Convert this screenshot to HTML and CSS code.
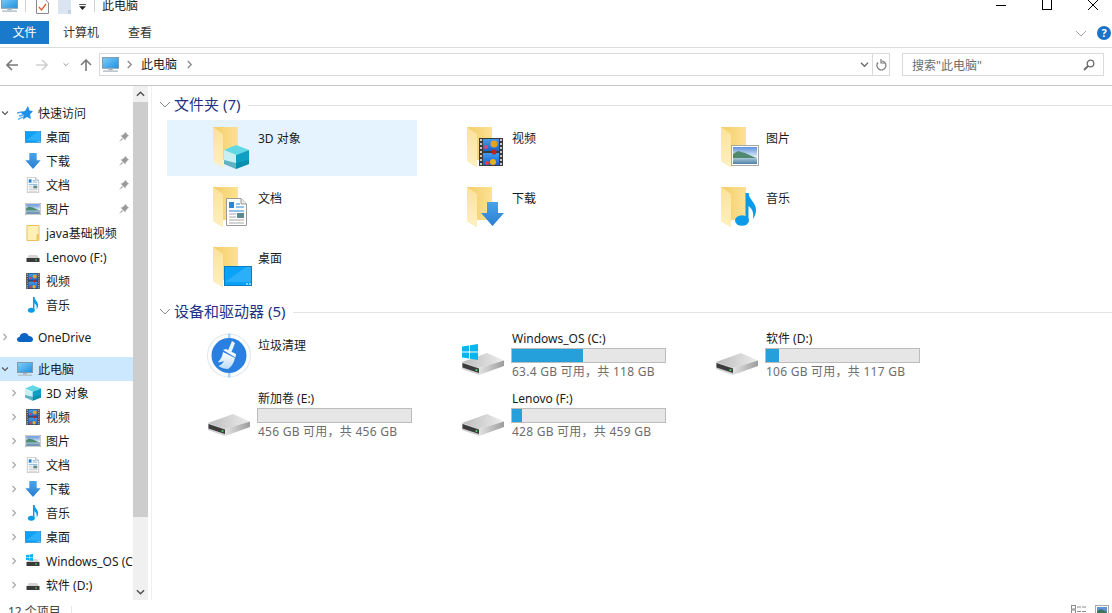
FILE: index.html
```html
<!DOCTYPE html>
<html>

<head>
    <meta charset="utf-8" />
    <title>此电脑</title>
    <link rel="stylesheet" href="styles.css">
</head>

<body>
    <svg class="sprite" xmlns="http://www.w3.org/2000/svg">
        <defs>
            <linearGradient id="gBack" x1="0" y1="0" x2="1" y2="0"><stop offset="0" stop-color="#f2cc68" /><stop offset="1" stop-color="#fde294" /></linearGradient>
            <linearGradient id="gLeaf" x1="0" y1="0" x2="0" y2="1"><stop offset="0" stop-color="#fbe29a" /><stop offset="1" stop-color="#fff0c0" /></linearGradient>
            <linearGradient id="gScreen" x1="0" y1="0" x2="1" y2="1"><stop offset="0" stop-color="#7fd0f8" /><stop offset="1" stop-color="#1f8fe0" /></linearGradient>
            <linearGradient id="gArrow" x1="0" y1="0" x2="0" y2="1"><stop offset="0" stop-color="#4aa3ea" /><stop offset="1" stop-color="#2a7ed0" /></linearGradient>
            <linearGradient id="gSky" x1="0" y1="0" x2="0" y2="1"><stop offset="0" stop-color="#5f92dc" /><stop offset=".6" stop-color="#e4f0f8" /></linearGradient>
            <linearGradient id="gBall" x1="0" y1="0" x2="0" y2="1"><stop offset="0" stop-color="#3f9cf0" /><stop offset="1" stop-color="#1a62c8" /></linearGradient>
            <linearGradient id="gDrive" x1="0" y1="0" x2="1" y2="0"><stop offset="0" stop-color="#bcbcbc" /><stop offset="1" stop-color="#ececec" /></linearGradient>
            <linearGradient id="gDriveSide" x1="0" y1="0" x2="1" y2="0"><stop offset="0" stop-color="#e2e2e2" /><stop offset="1" stop-color="#9c9c9c" /></linearGradient>
            <linearGradient id="gWater" x1="0" y1="0" x2="0" y2="1"><stop offset="0" stop-color="#a8c8d8" /><stop offset="1" stop-color="#4f7fa8" /></linearGradient>
            <linearGradient id="gBroom" x1="0" y1="0" x2="0" y2="1"><stop offset="0" stop-color="#ffffff" /><stop offset="1" stop-color="#bcdcf8" /></linearGradient>
        </defs>
        <symbol id="folder" viewBox="0 0 26 40">
            <path d="M0 0H25V33H10V40L0 34Z" fill="url(#gBack)" />
            <path d="M0 0L10 7V40L0 34Z" fill="url(#gLeaf)" />
        </symbol>
        <symbol id="cube" viewBox="0 0 25 24">
            <path d="M12 0L25 5L12 10L0 5Z" fill="#62d8e6" />
            <path d="M0 5L12 10V24L0 19Z" fill="#c8f0f2" />
            <path d="M12 10L25 5V19L12 24Z" fill="#0e9fc2" />
            <path d="M0 15L12 18L25 15V19L12 24L0 19Z" fill="#0a7f9e" opacity=".55" />
        </symbol>
        <symbol id="film" viewBox="0 0 24 28">
            <rect width="24" height="28" fill="#3a3a3a" />
            <path d="M1 2H3M1 6H3M1 10H3M1 14H3M1 18H3M1 22H3M1 26H3M21 2H23M21 6H23M21 10H23M21 14H23M21 18H23M21 22H23M21 26H23" stroke="#c8c8c8" stroke-width="2" />
            <rect x="4" y="1" width="16" height="12" fill="url(#gBall)" />
            <rect x="4" y="15" width="16" height="12" fill="url(#gBall)" />
            <circle cx="15" cy="6" r="3.5" fill="#e8a020" />
            <circle cx="7" cy="9" r="2" fill="#d84a70" />
            <circle cx="15" cy="14" r="2.5" fill="#c02020" />
            <circle cx="14" cy="24" r="3" fill="#e8b020" />
            <circle cx="8" cy="25" r="2" fill="#e04040" />
        </symbol>
        <symbol id="picture" viewBox="0 0 28 21">
            <rect x=".5" y=".5" width="27" height="20" fill="#fff" stroke="#a8a8a8" />
            <rect x="2" y="2" width="24" height="17" fill="url(#gSky)" />
            <path d="M2 9L7 6L14 8L24 12.500L26 13V14H2Z" fill="#4f8a70" />
            <rect x="2" y="13" width="24" height="6" fill="url(#gWater)" />
        </symbol>
        <symbol id="doc" viewBox="0 0 21 28">
            <path d="M.5 .5H15L20.5 6V27.5H.5Z" fill="#fff" stroke="#9a9a9a" />
            <path d="M15 .5V6H20.5" fill="#e8e8e8" stroke="#9a9a9a" />
            <rect x="3" y="4" width="5" height="6" fill="#2f86d0" />
            <path d="M10 6H14M10 9H18M3 13H18" stroke="#2f86d0" />
            <path d="M3 16H10M3 19H10M3 22H18M3 25H18" stroke="#a8a8a8" />
            <rect x="11" y="15" width="7" height="5" fill="#5a8a90" />
        </symbol>
        <symbol id="arrow" viewBox="0 0 23 24">
            <path d="M6 0H17V11H23L11.5 24L0 11H6Z" fill="url(#gArrow)" />
        </symbol>
        <symbol id="note" viewBox="0 0 21 33">
            <ellipse cx="7" cy="27.5" rx="7" ry="5.2" fill="#0a9be8" />
            <rect x="10.5" width="3" height="27" fill="#0a9be8" />
            <path d="M12 0H13.5C14 7 21 9 21 17C21 21 19.5 24 18 26C19 19 17 15 13 13Z" fill="#0a9be8" />
        </symbol>
        <symbol id="desktop" viewBox="0 0 28 20">
            <rect x=".5" y=".5" width="27" height="19" fill="#0aa2f8" stroke="#0b7cc0" />
            <path d="M1 16L22 1H27V16Z" fill="#4cbcfa" opacity=".5" />
            <path d="M22 18H24M25 18H27" stroke="#fff" />
        </symbol>
        <symbol id="pc" viewBox="0 0 16 16">
            <rect x=".5" y="1.5" width="15" height="10" fill="url(#gScreen)" stroke="#7d9cb0" />
            <rect x="6" y="12" width="4" height="1.5" fill="#a8b4bc" />
            <rect x="1" y="13.5" width="14" height="1.5" fill="#b8c4cc" />
        </symbol>
        <symbol id="drive" viewBox="0 0 42 23">
            <path d="M0 9L25 0L42 7.500L17 15Z" fill="url(#gDrive)" />
            <path d="M17 15L42 7.500V13L17 22Z" fill="url(#gDriveSide)" />
            <path d="M0 9L17 15V22L0 16Z" fill="#d0d0d0" />
            <path d="M.5 10L17 15.500V20L.5 14.500Z" fill="#3c3c3c" />
            <circle cx="14.500" cy="17" r="1.100" fill="#3fdc5a" />
        </symbol>
        <symbol id="driveSmall" viewBox="0 0 16 16">
            <path d="M2 9L4 6H12L14 9Z" fill="#d4d4d4" />
            <rect x="1.500" y="9" width="13" height="4" fill="#3a3a3a" />
            <rect x="10" y="10.500" width="2" height="1" fill="#4fe060" />
        </symbol>
        <symbol id="windows" viewBox="0 0 16 16">
            <path d="M0 2.500L7 1.500V7.500H0ZM8 1.300L16 0V7.500H8ZM0 8.500H7V14.500L0 13.500ZM8 8.500H16V16L8 14.700Z" fill="#0ab4f0" />
        </symbol>
        <symbol id="pin" viewBox="0 0 10 10">
            <path d="M6 0L10 4L8.500 4.500L6.500 7V8.500L1.500 3.500H3L5.500 1.500ZM3 6L0 10L4 7Z" fill="#9a9a9a" />
        </symbol>
        <symbol id="star" viewBox="0 0 16 16">
            <path d="M11 1L12.500 5.500L16 6L13 9.500L14 14L10 12L6 14.500L6.500 10L3 7L8 6Z" fill="#1f8ee6" />
            <path d="M0 8L5 7M2 11L6 10M1 14.500L6 12" stroke="#4aa6ee" stroke-width="1.300" />
        </symbol>
        <symbol id="cloud" viewBox="0 0 16 16">
            <path d="M3 13C1 13 0 11.800 0 10.500C0 9 1 8 2.500 8C3 5.500 5 4 7.500 4C9.500 4 11 5 11.800 7C14.300 7 16 8.500 16 10.500C16 12 15 13 13.500 13Z" fill="#0a64c4" />
        </symbol>
        <symbol id="smallFolder" viewBox="0 0 13 16">
            <path d="M.5 .5H12.500V15.500H.5Z" fill="#fff0b8" stroke="#e8c060" />
            <rect x="10" y="9" width="2.500" height="6.500" fill="#f0c860" />
        </symbol>
        <symbol id="chevR" viewBox="0 0 8 10">
            <path d="M2 1L6 5L2 9" fill="none" stroke="currentColor" stroke-width="1.500" />
        </symbol>
        <symbol id="chevD" viewBox="0 0 10 8">
            <path d="M1 2L5 6L9 2" fill="none" stroke="currentColor" stroke-width="1.500" />
        </symbol>
    </svg>

    <div class="window">
        <div class="titlebar">
            <svg class="qa-pc"><use href="#pc" /></svg>
            <span class="qa-sep sep-one"></span>
            <svg class="qa-props" viewBox="0 0 13 14">
                <path d="M.5 -1H9L12.500 3V13.500H.5Z" fill="#fff" stroke="#8a8a8a" />
                <path d="M3 7L5.500 10L10 4" fill="none" stroke="#e0602a" stroke-width="1.300" />
            </svg>
            <svg class="qa-page" viewBox="0 0 13 14">
                <path d="M0 -1H13V14H0Z" fill="#dbe5f2" />
                <rect x="10" y="10" width="3" height="4" fill="#c4d0e0" />
            </svg>
            <svg class="qa-drop" viewBox="0 0 8 7">
                <path d="M0 0H8V1H0ZM0 2.500H8L4 7Z" fill="#222" />
            </svg>
            <span class="qa-sep sep-two"></span>
            <span class="title-text">此电脑</span>
            <div class="winbtns">
                <svg class="winbtn" viewBox="0 0 10 10"><path d="M0 5.500H10" stroke="#000" /></svg>
                <svg class="winbtn" viewBox="0 0 10 10"><rect x=".5" y="-.5" width="9" height="10" fill="none" stroke="#000" /></svg>
                <svg class="winbtn" viewBox="0 0 10 10"><path d="M0 0L10 10M10 0L0 10" stroke="#000" /></svg>
            </div>
        </div>

        <div class="tabs">
            <span class="tab tab-file">文件</span>
            <span class="tab tab-computer">计算机</span>
            <span class="tab tab-view">查看</span>
            <svg class="ribbon-toggle" viewBox="0 0 10 6"><path d="M0 0L5 5L10 0" fill="none" stroke="#a8a8a8" /></svg>
            <span class="help">?</span>
        </div>

        <div class="addressbar">
            <div class="navbtns">
                <svg class="nav-arrow" viewBox="0 0 12 12"><path d="M6 1L1 6L6 11M1 6H12" fill="none" stroke="#7a7a7a" stroke-width="1.600" /></svg>
                <svg class="nav-arrow nav-forward" viewBox="0 0 12 12"><path d="M6 1L11 6L6 11M11 6H0" fill="none" stroke="#d0d0d0" stroke-width="1.600" /></svg>
                <svg class="nav-recent"><use href="#chevD" /></svg>
                <svg class="nav-arrow nav-up" viewBox="0 0 12 12"><path d="M1 6L6 1L11 6M6 1V12" fill="none" stroke="#7a7a7a" stroke-width="1.600" /></svg>
            </div>
            <div class="address">
                <svg class="addr-pc"><use href="#pc" /></svg>
                <svg class="addr-chev"><use href="#chevR" /></svg>
                <span class="addr-text">此电脑</span>
                <svg class="addr-chev"><use href="#chevR" /></svg>
                <svg class="addr-drop"><use href="#chevD" /></svg>
                <span class="addr-refresh">
                    <svg viewBox="0 0 12 12" width="12" height="12"><path d="M7 2A4.500 4.500 0 1 1 3 3.500M6 0V4H9.500" fill="none" stroke="#7a7a7a" stroke-width="1.200" /></svg>
                </span>
            </div>
            <div class="search">
                <span class="search-text">搜索"此电脑"</span>
                <svg viewBox="0 0 12 12" width="12" height="12"><circle cx="7.500" cy="4.500" r="3.300" fill="none" stroke="#6a6a6a" stroke-width="1.300" /><path d="M5 7L1 11" stroke="#6a6a6a" stroke-width="1.800" /></svg>
            </div>
        </div>

        <div class="main">
            <div class="nav">
                <div class="row top"><svg class="twist open"><use href="#chevD" /></svg><svg class="ico"><use href="#star" /></svg><span>快速访问</span></div>
                <div class="row child"><svg class="ico"><use href="#desktop" /></svg><span>桌面</span><svg class="pin"><use href="#pin" /></svg></div>
                <div class="row child"><svg class="ico"><use href="#arrow" /></svg><span>下载</span><svg class="pin"><use href="#pin" /></svg></div>
                <div class="row child"><svg class="ico"><use href="#doc" /></svg><span>文档</span><svg class="pin"><use href="#pin" /></svg></div>
                <div class="row child"><svg class="ico"><use href="#picture" /></svg><span>图片</span><svg class="pin"><use href="#pin" /></svg></div>
                <div class="row child"><svg class="ico"><use href="#smallFolder" /></svg><span>java基础视频</span></div>
                <div class="row child"><svg class="ico"><use href="#driveSmall" /></svg><span>Lenovo (F:)</span></div>
                <div class="row child"><svg class="ico"><use href="#film" /></svg><span>视频</span></div>
                <div class="row child"><svg class="ico"><use href="#note" /></svg><span>音乐</span></div>

                <div class="row top onedrive"><svg class="twist"><use href="#chevR" /></svg><svg class="ico"><use href="#cloud" /></svg><span>OneDrive</span></div>

                <div class="row top selected"><svg class="twist open"><use href="#chevD" /></svg><svg class="ico"><use href="#pc" /></svg><span>此电脑</span></div>
                <div class="row child has-twist"><svg class="twist"><use href="#chevR" /></svg><svg class="ico"><use href="#cube" /></svg><span>3D 对象</span></div>
                <div class="row child has-twist"><svg class="twist"><use href="#chevR" /></svg><svg class="ico"><use href="#film" /></svg><span>视频</span></div>
                <div class="row child has-twist"><svg class="twist"><use href="#chevR" /></svg><svg class="ico"><use href="#picture" /></svg><span>图片</span></div>
                <div class="row child has-twist"><svg class="twist"><use href="#chevR" /></svg><svg class="ico"><use href="#doc" /></svg><span>文档</span></div>
                <div class="row child has-twist"><svg class="twist"><use href="#chevR" /></svg><svg class="ico"><use href="#arrow" /></svg><span>下载</span></div>
                <div class="row child has-twist"><svg class="twist"><use href="#chevR" /></svg><svg class="ico"><use href="#note" /></svg><span>音乐</span></div>
                <div class="row child has-twist"><svg class="twist"><use href="#chevR" /></svg><svg class="ico"><use href="#desktop" /></svg><span>桌面</span></div>
                <div class="row child has-twist"><svg class="twist"><use href="#chevR" /></svg><svg class="ico" viewBox="0 0 16 16"><use href="#driveSmall" width="16" height="16" /><use href="#windows" width="7" height="7" x="1" y="1" /></svg><span>Windows_OS (C:)</span></div>
                <div class="row child has-twist"><svg class="twist"><use href="#chevR" /></svg><svg class="ico"><use href="#driveSmall" /></svg><span>软件 (D:)</span></div>
            </div>

            <div class="scrollbar">
                <span class="sb-btn"><svg viewBox="0 0 10 6" width="9" height="6"><path d="M1 5L5 1L9 5" fill="none" stroke="#505050" stroke-width="1.600" /></svg></span>
                <span class="sb-thumb"></span>
                <span class="sb-track"></span>
                <span class="sb-btn"><svg viewBox="0 0 10 6" width="9" height="6"><path d="M1 1L5 5L9 1" fill="none" stroke="#505050" stroke-width="1.600" /></svg></span>
            </div>

            <div class="content">
                <div class="group-head">
                    <svg viewBox="0 0 10 6" width="10" height="6"><path d="M0 0L5 5L10 0" fill="none" stroke="#8a8a8a" /></svg>
                    <span class="group-title">文件夹 (7)</span>
                    <span class="group-line"></span>
                </div>
                <div class="tiles">
                    <div class="tile active">
                        <svg class="tile-icon" viewBox="0 0 49 56"><use href="#folder" x="5" y="7" width="26" height="40" /><use href="#cube" x="16" y="25" width="25" height="24" /></svg>
                        <span class="tile-label">3D 对象</span>
                    </div>
                    <div class="tile">
                        <svg class="tile-icon" viewBox="0 0 49 56"><use href="#folder" x="5" y="7" width="26" height="40" /><use href="#film" x="17" y="18" width="24" height="28" /></svg>
                        <span class="tile-label">视频</span>
                    </div>
                    <div class="tile">
                        <svg class="tile-icon" viewBox="0 0 49 56"><use href="#folder" x="5" y="7" width="26" height="40" /><use href="#picture" x="15" y="25" width="28" height="21" /></svg>
                        <span class="tile-label">图片</span>
                    </div>
                    <div class="tile">
                        <svg class="tile-icon" viewBox="0 0 49 56"><use href="#folder" x="5" y="7" width="26" height="40" /><use href="#doc" x="18" y="18" width="21" height="28" /></svg>
                        <span class="tile-label">文档</span>
                    </div>
                    <div class="tile">
                        <svg class="tile-icon" viewBox="0 0 49 56"><use href="#folder" x="5" y="7" width="26" height="40" /><use href="#arrow" x="19" y="22" width="23" height="24" /></svg>
                        <span class="tile-label">下载</span>
                    </div>
                    <div class="tile">
                        <svg class="tile-icon" viewBox="0 0 49 56"><use href="#folder" x="5" y="7" width="26" height="40" /><use href="#note" x="19" y="13" width="21" height="33" /></svg>
                        <span class="tile-label">音乐</span>
                    </div>
                    <div class="tile">
                        <svg class="tile-icon" viewBox="0 0 49 56"><use href="#folder" x="5" y="7" width="26" height="40" /><use href="#desktop" x="16" y="26" width="28" height="20" /></svg>
                        <span class="tile-label">桌面</span>
                    </div>
                </div>

                <div class="group-head second">
                    <svg viewBox="0 0 10 6" width="10" height="6"><path d="M0 0L5 5L10 0" fill="none" stroke="#8a8a8a" /></svg>
                    <span class="group-title">设备和驱动器 (5)</span>
                    <span class="group-line"></span>
                </div>
                <div class="tiles">
                    <div class="tile">
                        <svg class="tile-icon" viewBox="0 0 49 56">
                            <circle cx="21" cy="28.500" r="22" fill="#dfe6ec" />
                            <circle cx="21" cy="28.500" r="21" fill="#fff" />
                            <rect x="20" y="6.500" width="2.500" height="5" fill="#a8d4f4" />
                            <rect x="20" y="45.500" width="2.500" height="5" fill="#a8d4f4" />
                            <circle cx="21" cy="28.500" r="17.500" fill="#2a80e0" />
                            <path d="M24 14L27 16L23.500 25L20 23.500Z" fill="#eaf5fd" />
                            <path d="M15 23L18 22L28 27L27.500 30.500Z" fill="#f4faff" />
                            <path d="M15 25L27 31C26 36 23 40 20 42C17 42 13 41 10.500 39C13 38 15 36 16 34C14 35 12 35.500 10 35C13 32 14.500 29 15 25Z" fill="url(#gBroom)" />
                        </svg>
                        <span class="tile-label">垃圾清理</span>
                    </div>
                    <div class="tile">
                        <svg class="tile-icon" viewBox="0 0 49 56"><use href="#drive" y="26" width="42" height="23" /><use href="#windows" y="17" width="16" height="16" /></svg>
                        <div class="drive-info">
                            <span class="drive-name">Windows_OS (C:)</span>
                            <div class="bar"><div class="bar-fill" style="width: 71px"></div></div>
                            <span class="drive-size">63.4 GB 可用，共 118 GB</span>
                        </div>
                    </div>
                    <div class="tile">
                        <svg class="tile-icon" viewBox="0 0 49 56"><use href="#drive" y="26" width="42" height="23" /></svg>
                        <div class="drive-info">
                            <span class="drive-name">软件 (D:)</span>
                            <div class="bar"><div class="bar-fill" style="width: 13px"></div></div>
                            <span class="drive-size">106 GB 可用，共 117 GB</span>
                        </div>
                    </div>
                    <div class="tile">
                        <svg class="tile-icon" viewBox="0 0 49 56"><use href="#drive" y="27" width="42" height="23" /></svg>
                        <div class="drive-info">
                            <span class="drive-name">新加卷 (E:)</span>
                            <div class="bar"></div>
                            <span class="drive-size">456 GB 可用，共 456 GB</span>
                        </div>
                    </div>
                    <div class="tile">
                        <svg class="tile-icon" viewBox="0 0 49 56"><use href="#drive" y="27" width="42" height="23" /></svg>
                        <div class="drive-info">
                            <span class="drive-name">Lenovo (F:)</span>
                            <div class="bar"><div class="bar-fill" style="width: 10px"></div></div>
                            <span class="drive-size">428 GB 可用，共 459 GB</span>
                        </div>
                    </div>
                </div>
            </div>
        </div>

        <div class="status">
            <span class="status-text">12 个项目</span>
            <span class="status-sep"></span>
            <svg class="view-details" viewBox="0 0 16 8"><rect x=".5" y=".5" width="4" height="3.500" fill="none" stroke="#8a8a8a" /><rect x=".5" y="5" width="4" height="3.500" fill="none" stroke="#8a8a8a" /><path d="M6 2H10M11 2H15M6 6.500H10M11 6.500H15" stroke="#8a8a8a" /></svg>
            <svg class="view-large" viewBox="0 0 14 8"><rect x=".5" y=".5" width="13" height="10" fill="#fff" stroke="#a8a8a8" /><rect x="2" y="2" width="10" height="6" fill="#5f92dc" /><path d="M2 6L6 4L12 7V8H2Z" fill="#3f7560" /></svg>
        </div>
    </div>
</body>

</html>
```

FILE: styles.css
```css
html,
body {
    margin: 0px;
    padding: 0px;
    width: 100%;
    height: 100%;
    overflow: hidden;
    background-color: #fff;
}

body {
    font-family: 'Noto Sans', 'Noto Sans CJK SC', sans-serif;
    font-size: 12px;
    color: #1a1a1a;
}

.sprite {
    position: absolute;
    width: 0px;
    height: 0px;
}

.window {
    height: 613px;
    display: flex;
    flex-direction: column;
    overflow: hidden;
}

/* title bar, cut off by the top of the picture */
.titlebar {
    height: 21px;
    flex: none;
    display: flex;
    align-items: flex-start;
    overflow: hidden;
}

.qa-pc {
    width: 17px;
    height: 17px;
    margin-top: -4px;
    margin-left: 1px;
}

.qa-sep {
    width: 1px;
    height: 12px;
    background-color: #d0d0d0;
}

.sep-one {
    margin-left: 7px;
}

.qa-props {
    width: 13px;
    height: 14px;
    margin-left: 10px;
}

.qa-page {
    width: 13px;
    height: 14px;
    margin-left: 9px;
}

.qa-drop {
    width: 7px;
    height: 6px;
    margin-left: 8px;
    margin-top: 4px;
}

.sep-two {
    margin-left: 8px;
}

.title-text {
    margin-left: 7px;
    line-height: 11px;
    color: #222;
}

.winbtns {
    margin-left: auto;
    display: flex;
    gap: 36px;
    padding-right: 14px;
}

.winbtn {
    width: 10px;
    height: 10px;
}

/* ribbon tabs */
.tabs {
    height: 26px;
    flex: none;
    display: flex;
    align-items: flex-start;
    border-bottom: 1px solid #dcdcdc;
}

.tab {
    height: 23px;
    line-height: 24px;
    color: #333;
}

.tab-file {
    width: 49px;
    text-align: center;
    background-color: #1979ca;
    color: #fff;
}

.tab-computer {
    margin-left: 14px;
}

.tab-view {
    margin-left: 29px;
}

.ribbon-toggle {
    width: 10px;
    height: 6px;
    margin-left: auto;
    margin-top: 10px;
}

.help {
    width: 14px;
    height: 14px;
    margin-left: 11px;
    margin-right: 1px;
    margin-top: 5px;
    border-radius: 50%;
    background-color: #1b72c8;
    color: #fff;
    font-size: 11px;
    font-weight: bold;
    line-height: 14px;
    text-align: center;
}

/* address row */
.addressbar {
    height: 32px;
    flex: none;
    padding-top: 5px;
    display: flex;
    align-items: flex-start;
    border-bottom: 1px solid #c4c4c4;
}

.navbtns {
    width: 99px;
    height: 23px;
    display: flex;
    align-items: center;
    padding-left: 6px;
    box-sizing: border-box;
}

.nav-arrow {
    width: 12px;
    height: 12px;
}

.nav-forward {
    margin-left: 18px;
}

.nav-recent {
    width: 6px;
    height: 5px;
    margin-left: 15px;
    color: #8a8a8a;
}

.nav-up {
    margin-left: 11px;
}

.address {
    width: 791px;
    height: 23px;
    box-sizing: border-box;
    border: 1px solid #d9d9d9;
    display: flex;
    align-items: center;
    padding-left: 2px;
}

.addr-pc {
    width: 17px;
    height: 17px;
}

.addr-chev {
    width: 7px;
    height: 9px;
    margin-left: 7px;
    color: #8a8a8a;
}

.addr-text {
    margin-left: 8px;
    margin-right: 6px;
    width: 36px;
    padding-bottom: 2px;
}

.addr-text + .addr-chev {
    margin-left: 3px;
}

.addr-drop {
    width: 9px;
    height: 7px;
    margin-left: auto;
    margin-right: 3px;
    color: #6a6a6a;
}

.addr-refresh {
    height: 21px;
    width: 17px;
    box-sizing: border-box;
    border-left: 1px solid #d9d9d9;
    display: flex;
    align-items: center;
    justify-content: center;
}

.search {
    width: 202px;
    height: 23px;
    margin-left: 12px;
    box-sizing: border-box;
    border: 1px solid #d9d9d9;
    display: flex;
    align-items: center;
    justify-content: space-between;
    padding-left: 9px;
    padding-right: 8px;
}

.search-text {
    color: #6d6d6d;
}

/* navigation pane */
.main {
    height: 514px;
    flex: none;
    display: flex;
}

.nav {
    width: 133px;
    flex: none;
    padding-top: 15px;
    box-sizing: border-box;
    overflow: hidden;
}

.row {
    height: 24px;
    display: flex;
    align-items: center;
    white-space: nowrap;
    overflow: hidden;
}

.row.top {
    padding-left: 17px;
}

.row.child {
    padding-left: 25px;
}

.row.has-twist {
    padding-left: 11px;
}

.row.top .twist {
    margin-left: -15px;
    margin-right: 9px;
}

.row.top .twist.open {
    margin-left: -16px;
    margin-right: 8px;
}

.row.has-twist .twist {
    margin-right: 8px;
}

.row.onedrive {
    margin-top: 8px;
}

.row.selected {
    margin-top: 8px;
    background-color: #cce8ff;
}

.twist {
    width: 6px;
    height: 8px;
    flex: none;
    color: #a6a6a6;
}

.twist.open {
    width: 8px;
    height: 6px;
    color: #555;
}

.ico {
    width: 16px;
    height: 16px;
    flex: none;
    margin-right: 5px;
}

.pin {
    width: 10px;
    height: 10px;
    margin-left: auto;
    margin-right: 4px;
}

/* scrollbar */
.scrollbar {
    width: 15px;
    flex: none;
    display: flex;
    flex-direction: column;
    background-color: #f0f0f0;
}

.sb-btn {
    height: 16px;
    flex: none;
    display: flex;
    align-items: center;
    justify-content: center;
}

.sb-thumb {
    height: 415px;
    background-color: #cdcdcd;
}

.sb-track {
    flex: 1;
}

/* right pane */
.content {
    flex: 1;
    margin-left: 3px;
    border-left: 1px solid #f0f0f0;
    padding-top: 9px;
    padding-left: 8px;
    overflow: hidden;
}

.group-head {
    height: 20px;
    display: flex;
    align-items: center;
    gap: 4px;
}

.group-head.second {
    margin-top: 6px;
}

.group-title {
    font-size: 15px;
    color: #1e3287;
    white-space: nowrap;
    padding-bottom: 4px;
}

.group-line {
    flex: 1;
    height: 1px;
    margin-left: 4px;
    background-color: #e2e2e2;
}

.tiles {
    margin-top: 5px;
    margin-left: 7px;
    display: grid;
    grid-template-columns: 250px 250px 250px;
    grid-auto-rows: 56px;
    gap: 4px;
}

.tile {
    display: flex;
    align-items: flex-start;
    padding-left: 41px;
}

.tile.active {
    background-color: #e5f3ff;
}

.tile-icon {
    width: 49px;
    height: 56px;
    flex: none;
    overflow: visible;
}

.tile-label {
    margin-top: 11px;
    margin-left: 1px;
    line-height: 16px;
    color: #1a1a1a;
}

.drive-info {
    padding-top: 4px;
    display: flex;
    flex-direction: column;
}

.drive-name {
    margin-left: 1px;
    line-height: 16px;
}

.bar {
    width: 155px;
    height: 15px;
    margin-top: 1px;
    box-sizing: border-box;
    border: 1px solid #bcbcbc;
    background-color: #e6e6e6;
}

.bar-fill {
    height: 100%;
    background-color: #26a0da;
}

.drive-size {
    margin-top: 1px;
    margin-left: 1px;
    line-height: 16px;
    letter-spacing: 0.25px;
    color: #6d6d6d;
}

/* status bar, cut off by the bottom of the picture */
.status {
    height: 13px;
    flex: none;
    display: flex;
    align-items: flex-start;
    padding-left: 8px;
    overflow: hidden;
}

.status-text {
    margin-top: 3px;
    line-height: 18px;
    color: #444;
}

.status-sep {
    width: 1px;
    height: 13px;
    margin-left: 10px;
    margin-top: 6px;
    background-color: #e8e8e8;
}

.view-details {
    width: 16px;
    height: 8px;
    margin-left: auto;
    margin-top: 5px;
}

.view-large {
    width: 14px;
    height: 8px;
    margin-left: 8px;
    margin-right: 3px;
    margin-top: 5px;
}
```
